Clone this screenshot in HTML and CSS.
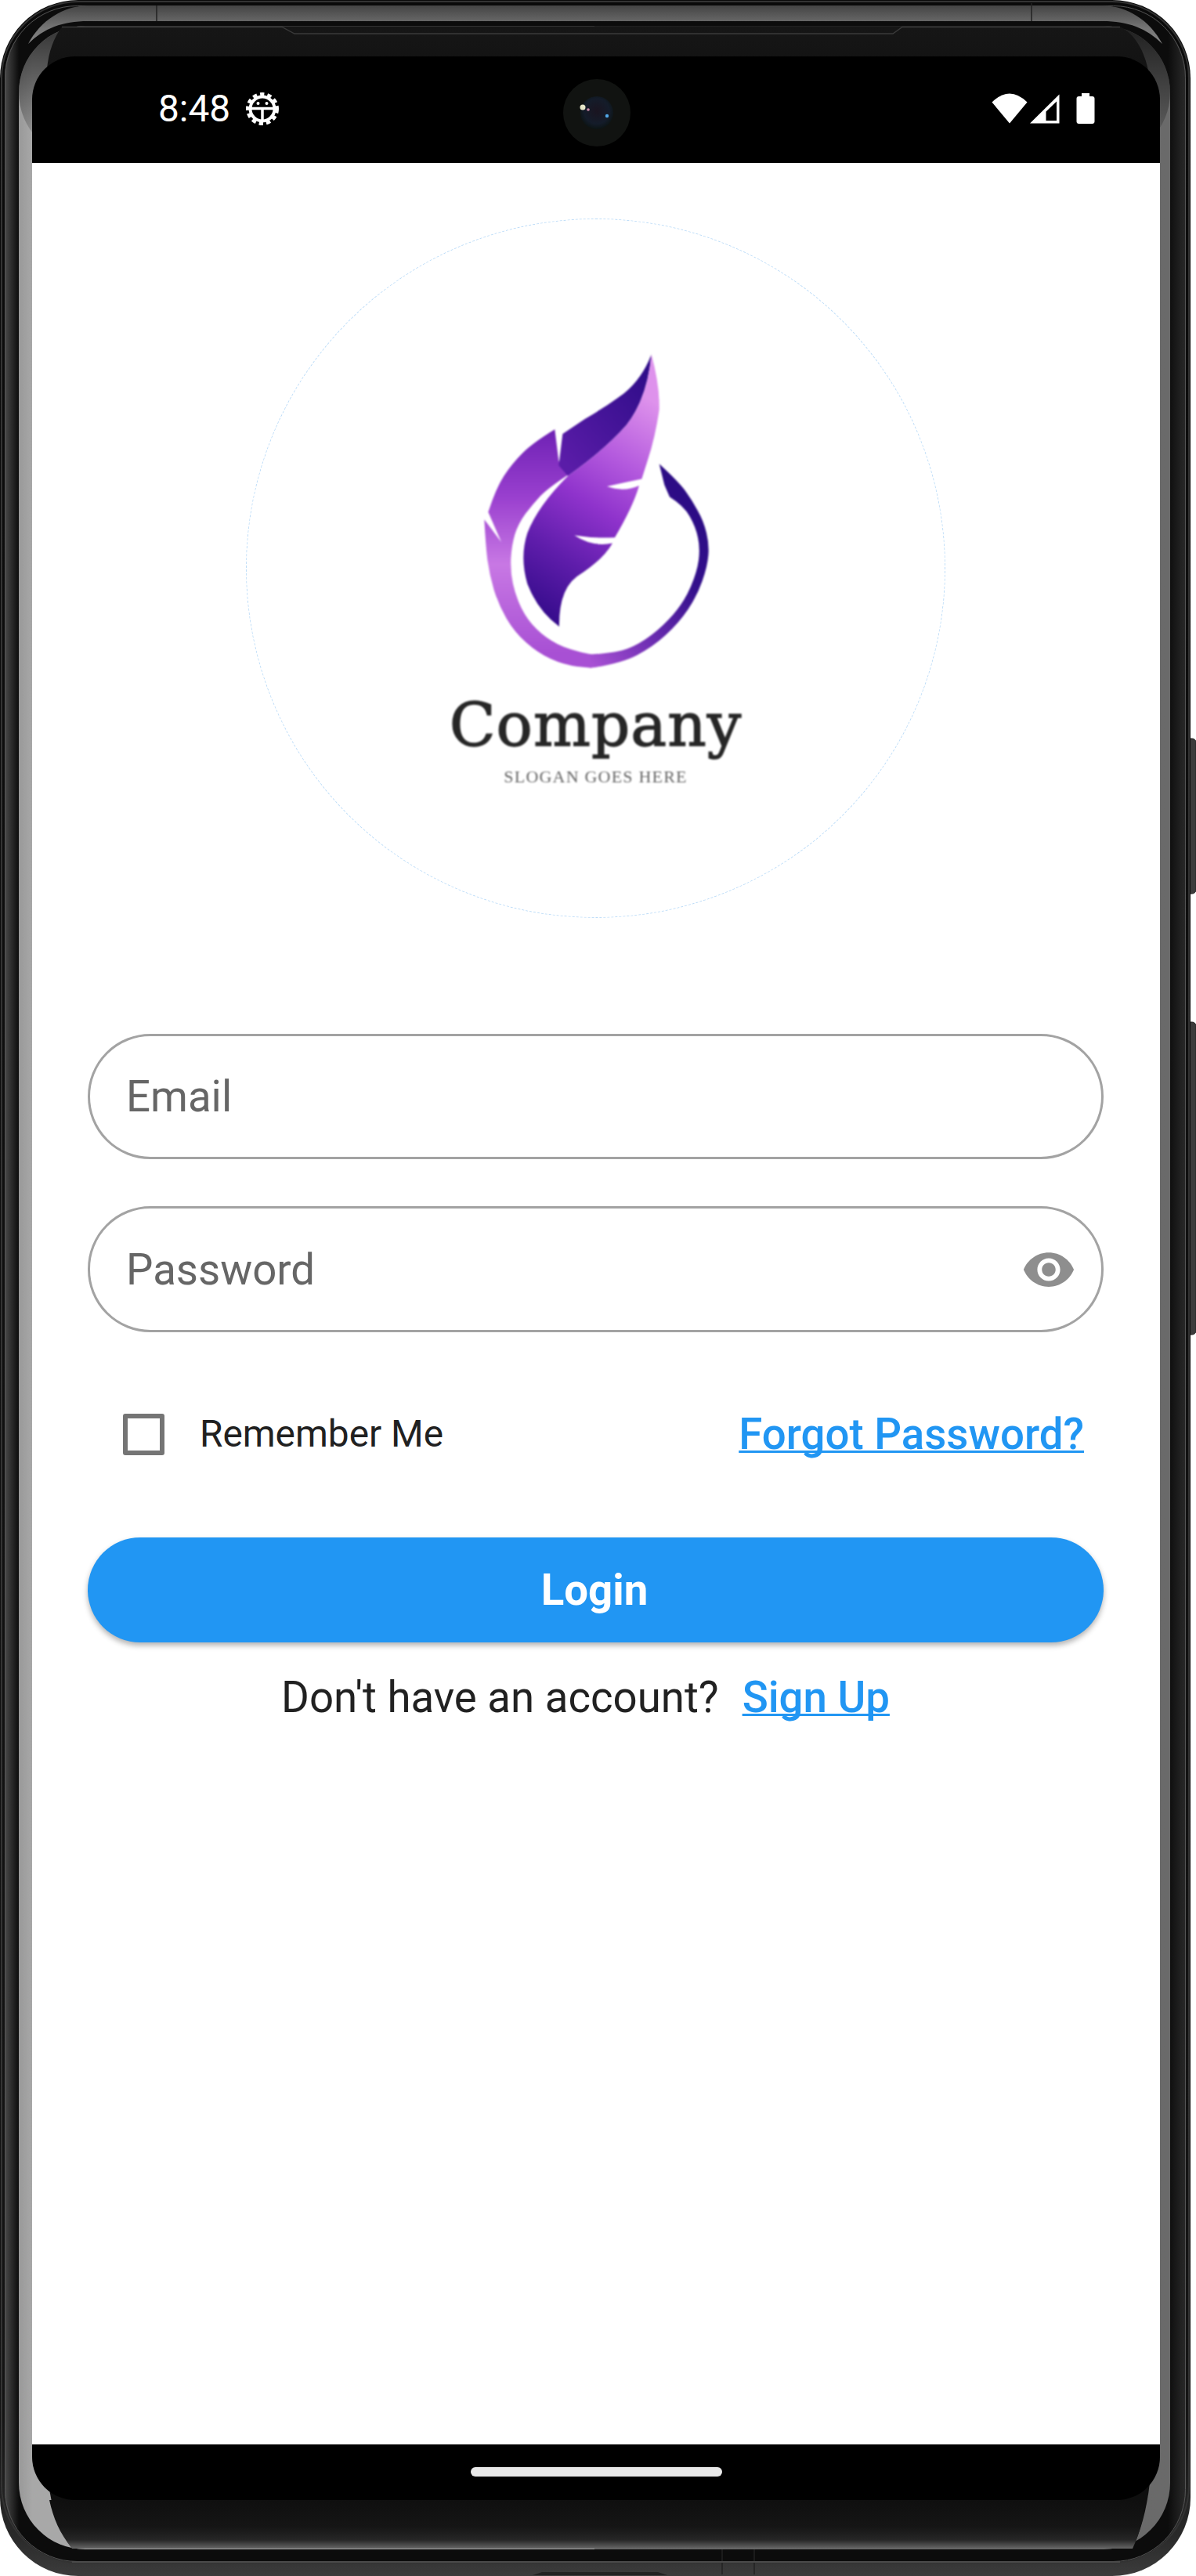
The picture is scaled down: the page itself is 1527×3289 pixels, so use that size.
FILE: index.html
```html
<!DOCTYPE html>
<html lang="en">
<head>
<meta charset="utf-8">
<title>Login</title>
<link rel="stylesheet" href="styles.css">
</head>
<body>
<div class="device">
  <svg class="frame" viewBox="0 0 1527 3289" width="1527" height="3289" aria-hidden="true">
    <defs>
      <linearGradient id="shell" x1="0" y1="0" x2="0" y2="1">
        <stop offset="0" stop-color="#0a0a0a"/><stop offset=".94" stop-color="#141414"/><stop offset=".985" stop-color="#2a2a2a"/><stop offset="1" stop-color="#3c3c3c"/>
      </linearGradient>
      <linearGradient id="rim" x1="0" y1="0" x2="1" y2="0">
        <stop offset="0" stop-color="#4a4a4a"/><stop offset=".012" stop-color="#0c0c0c"/><stop offset=".985" stop-color="#0c0c0c"/><stop offset="1" stop-color="#2a2a2a"/>
      </linearGradient>
      <linearGradient id="band" x1="0" y1="0" x2="0" y2="1">
        <stop offset="0" stop-color="#444"/><stop offset=".6" stop-color="#767676"/><stop offset="1" stop-color="#848484"/>
      </linearGradient>
      <linearGradient id="glass" x1="0" y1="0" x2="1" y2="0">
        <stop offset="0" stop-color="#999"/><stop offset=".012" stop-color="#a8a8a8"/><stop offset=".5" stop-color="#a8a8a8"/><stop offset=".5" stop-color="#686868"/><stop offset="1" stop-color="#6a6a6a"/>
      </linearGradient>
      <linearGradient id="glassfade" x1="0" y1="0" x2="0" y2="1">
        <stop offset="0" stop-color="#000" stop-opacity=".7"/><stop offset="1" stop-color="#000" stop-opacity="0"/>
      </linearGradient>
      <linearGradient id="chin" x1="0" y1="0" x2="0" y2="1">
        <stop offset="0" stop-color="#0f0f0f"/><stop offset=".55" stop-color="#151515"/><stop offset=".82" stop-color="#262626"/><stop offset="1" stop-color="#666"/>
      </linearGradient>
      <linearGradient id="forehead" x1="0" y1="0" x2="0" y2="1">
        <stop offset="0" stop-color="#161616"/><stop offset="1" stop-color="#101010"/>
      </linearGradient>
    </defs>
    <rect class="key" x="1512" y="943" width="15" height="198" rx="5"/>
    <rect class="key" x="1512" y="1305" width="15" height="399" rx="5"/>
    <rect width="1520" height="3289" rx="100" fill="url(#shell)"/>
    <rect x="2" y="2" width="1516" height="3270" rx="98" fill="none" stroke="#333" stroke-width="2"/>
    <rect x="6" y="7" width="1508" height="3264" rx="92" fill="url(#rim)"/>
    <rect x="6.500" y="7.500" width="1507" height="3263" rx="92" fill="none" stroke="#555" stroke-width="1"/>
    <path d="M36 56C52 26 80 8 112 7H1408C1440 8 1468 26 1484 56C1464 36 1440 27 1408 27H112C80 27 56 36 36 56Z" fill="url(#band)"/>
    <path d="M200 7V27M1317 4V27M922 3255V3287M963 3255V3287" stroke="#222" stroke-width="1.500" fill="none"/>
    <rect x="24" y="33" width="1470" height="3222" rx="85" fill="url(#glass)"/>
    <rect x="24" y="33" width="1470" height="170" rx="85" fill="url(#glassfade)"/>
    <path d="M79 34H1430C1450 44 1461 66 1466 90V130H60V88C62 66 68 50 79 34Z" fill="url(#forehead)"/>
    <path d="M79 34.500H360L376 43H1140L1152 34.500H1430" stroke="#3a3a3a" stroke-width="1.300" fill="none"/>
    <path d="M60 3150H1468V3170C1464 3205 1456 3232 1446 3254H92C76 3232 66 3205 62 3170Z" fill="#0e0e0e"/>
    <path d="M62 3192H1463C1460 3215 1455 3235 1446 3254H92C76 3234 68 3215 63 3192Z" fill="url(#chin)"/>
    <path d="M92 3271H1430" stroke="#4a4a4a" stroke-width="2"/>
    <path d="M680 3288L692 3284H840L852 3288Z" fill="#222"/>
  </svg>

  <div class="screen">
    <header class="status">
      <span class="time">8:48</span>
      <svg class="gear" viewBox="0 0 44 44" width="44" height="44" aria-hidden="true">
        <circle cx="22" cy="22" r="15.500" fill="none" stroke="#fff" stroke-width="4"/>
        <circle cx="22" cy="22" r="18.500" fill="none" stroke="#fff" stroke-width="5" stroke-dasharray="5.300 4"/>
        <path d="M7 21.500H37M22 21.500V37" stroke="#fff" stroke-width="3.500" fill="none"/>
        <circle cx="16.500" cy="15" r="2" fill="#fff"/>
        <circle cx="27.500" cy="15" r="2" fill="#fff"/>
      </svg>
      <div class="sys">
        <svg class="wifi" viewBox="0 0 46 40" width="46" height="40" aria-hidden="true"><path d="M23 38.500L.5 11.500Q23-10.500 45.500 11.500Z" fill="#fff"/></svg>
        <svg class="signal" viewBox="0 0 38 38" width="38" height="38" aria-hidden="true"><path fill-rule="evenodd" d="M0 37.500L37.500 .5V37.500ZM20.500 34H34V9.500L20.500 22.500Z" fill="#fff"/></svg>
        <svg class="battery" viewBox="0 0 24 40" width="24" height="40" aria-hidden="true"><path d="M7 0H17V4H20.500Q23.500 4 23.500 7V36Q23.500 39 20.500 39H3.500Q.5 39 .5 36V7Q.5 4 3.500 4H7Z" fill="#fff"/></svg>
      </div>
      <svg class="camera" viewBox="0 0 86 86" width="86" height="86" aria-hidden="true">
        <defs>
          <radialGradient id="lens" cx=".5" cy=".45" r=".55"><stop offset="0" stop-color="#1a1420"/><stop offset=".7" stop-color="#141c2a"/><stop offset="1" stop-color="#0c1414"/></radialGradient>
        </defs>
        <circle cx="43" cy="43" r="43" fill="#111311"/>
        <circle cx="43" cy="43" r="21" fill="url(#lens)"/>
        <circle cx="25" cy="36" r="3.500" fill="#e6e6c8"/>
        <circle cx="32" cy="39" r="1.800" fill="#c88aa8"/>
        <circle cx="56" cy="47" r="2.200" fill="#52a8e8"/>
      </svg>
    </header>

    <main class="main">
      <div class="logo-ring">
        <svg class="mark" viewBox="0 0 1350 1180" width="450" height="452" preserveAspectRatio="none" role="img" aria-label="Company logo">
          <defs>
            <linearGradient id="swoosh" gradientUnits="userSpaceOnUse" x1="0" y1="340" x2="0" y2="1080">
              <stop offset="0" stop-color="#6f22b5"/><stop offset=".3" stop-color="#9a40cf"/><stop offset=".6" stop-color="#c878e4"/><stop offset="1" stop-color="#a850d4"/>
            </linearGradient>
            <linearGradient id="ring" gradientUnits="userSpaceOnUse" x1="640" y1="1110" x2="1090" y2="650">
              <stop offset="0" stop-color="#a850d4"/><stop offset=".35" stop-color="#6a2cb0"/><stop offset=".7" stop-color="#34108c"/><stop offset="1" stop-color="#2c0c85"/>
            </linearGradient>
            <linearGradient id="vane" gradientUnits="userSpaceOnUse" x1="860" y1="230" x2="470" y2="960">
              <stop offset="0" stop-color="#de92ec"/><stop offset=".28" stop-color="#b45ade"/><stop offset=".5" stop-color="#8f33cc"/><stop offset=".75" stop-color="#5f1dab"/><stop offset="1" stop-color="#360c8c"/>
            </linearGradient>
            <linearGradient id="tip" gradientUnits="userSpaceOnUse" x1="860" y1="120" x2="540" y2="440">
              <stop offset="0" stop-color="#2e0c88"/><stop offset="1" stop-color="#5a1ca8"/>
            </linearGradient>
          </defs>
          <path d="M235 635Q240 720 247 770Q255 820 272 870Q290 920 320 965Q350 1010 395 1045Q440 1080 490 1100Q540 1120 590 1125L645 1130L645 1085Q560 1070 515 1050Q470 1030 435 1000Q400 970 377 930Q355 890 345 850Q335 810 337 765Q340 720 352 685Q365 650 392 617Q420 585 450 557Q480 530 555 487L520 440L505 335Q420 380 380 415Q340 450 310 490Q280 530 250 610L300 710Z" fill="url(#swoosh)"/>
          <path d="M640 1130Q760 1115 820 1087Q880 1060 930 1020Q980 980 1015 935Q1050 890 1070 840Q1090 790 1093 755Q1097 720 1086 680Q1075 640 1052 605Q1030 570 1005 540Q980 510 905 450L925 520L945 560Q1000 590 1022 625Q1045 660 1053 695Q1062 730 1056 770Q1050 810 1025 860Q1000 910 960 950Q920 990 875 1020Q830 1050 785 1065Q740 1080 640 1085Z" fill="url(#ring)"/>
          <path d="M875 85Q840 165 770 215Q700 260 620 300L535 350L520 455L555 490Q700 400 780 320Q860 230 875 85Z" fill="url(#tip)"/>
          <path d="M875 85Q908 190 905 270Q890 360 860 440L838 500Q770 512 705 525Q770 545 828 522Q806 590 735 695Q650 698 580 688Q650 728 726 714Q690 770 590 825Q520 870 522 992Q440 940 400 850Q370 760 400 680Q440 590 555 490Q700 400 780 320Q860 230 875 85Z" fill="url(#vane)"/>
        </svg>
        <span class="brand">Company</span>
        <span class="slogan">SLOGAN GOES HERE</span>
      </div>

      <div class="field field-email"><span class="hint">Email</span></div>
      <div class="field field-pass">
        <span class="hint">Password</span>
        <svg class="eye" viewBox="0 0 24 24" width="70" height="70" aria-hidden="true"><path d="M12 4.500C7 4.500 2.730 7.610 1 12c1.730 4.390 6 7.500 11 7.500s9.270-3.110 11-7.500c-1.730-4.390-6-7.500-11-7.500zM12 17c-2.760 0-5-2.240-5-5s2.240-5 5-5 5 2.240 5 5-2.240 5-5 5zm0-8c-1.660 0-3 1.340-3 3s1.340 3 3 3 3-1.340 3-3-1.340-3-3-3z"/></svg>
      </div>

      <div class="options">
        <span class="check"></span>
        <span class="remember">Remember Me</span>
        <a class="link forgot" href="#">Forgot Password?</a>
      </div>

      <button class="login" type="button">Login</button>

      <p class="signup"><span>Don't have an account?</span><a class="link" href="#">Sign Up</a></p>
    </main>

    <footer class="nav"><span class="pill"></span></footer>
  </div>
</div>
</body>
</html>
```

FILE: styles.css
```css
* { box-sizing: border-box; }
html, body { margin: 0; padding: 0; background: #fff; }
body { font-family: Roboto, "Liberation Sans", sans-serif; }

.device {
  position: relative;
  width: 1527px;
  height: 3289px;
  padding: 72px 46px 97px 41px;
  overflow: hidden;
}
.frame { position: absolute; left: 0; top: 0; display: block; }
.key { fill: #3c3c3c; stroke: #222; stroke-width: 1; }

.screen {
  position: relative;
  display: flex;
  flex-direction: column;
  width: 1440px;
  height: 3120px;
}

.status {
  position: relative;
  display: flex;
  align-items: center;
  flex: 0 0 136px;
  padding: 0 83px 0 161px;
  background: #000;
  border-radius: 55px 55px 0 0;
  color: #fff;
}
.time { font-size: 47.75px; line-height: 57px; margin-top: -1px; }
.gear { margin-left: 19px; flex: none; margin-top: -2px; }
.sys { display: flex; align-items: center; margin-left: auto; margin-top: -3px; }
.wifi { flex: none; }
.signal { flex: none; margin-left: 3px; margin-top: 1px; }
.battery { flex: none; margin-left: 21px; }
.camera { position: absolute; left: 678px; top: 29px; }

.main {
  flex: 1;
  display: flex;
  flex-direction: column;
  padding: 71px 72px 0 71px;
  background: #fff;
}

.logo-ring {
  display: flex;
  flex-direction: column;
  align-items: center;
  flex: none;
  width: 893px;
  height: 893px;
  margin: 0 auto;
  border: 1px dashed #bcdcf8;
  border-radius: 50%;
}
.mark { display: block; margin-top: 140px; margin-left: 8px; filter: blur(0.8px); flex: none; }
.brand {
  margin-top: 14px;
  font-family: "DejaVu Serif", serif;
  font-size: 77px;
  line-height: 80px;
  letter-spacing: 1px;
  color: #262626;
  -webkit-text-stroke: 1.4px #262626;
  filter: blur(0.8px);
}
.slogan {
  margin-top: 13px;
  font-family: "Liberation Serif", serif;
  font-size: 22px;
  line-height: 26px;
  letter-spacing: 1.2px;
  color: #666;
  filter: blur(0.8px);
}

.field {
  display: flex;
  align-items: center;
  justify-content: space-between;
  height: 160px;
  padding: 0 32px 0 46px;
  border: 3px solid #a3a3a3;
  border-radius: 80px;
}
.field-email { margin-top: 148px; }
.field-pass { margin-top: 60px; height: 161px; }
.hint { font-size: 54.6px; line-height: 66px; color: #666; }
.eye { fill: #8e8e8e; flex: none; }

.options {
  display: flex;
  align-items: center;
  height: 84px;
  margin-top: 88px;
  padding: 0 25px 0 45px;
}
.check {
  flex: none;
  width: 53px;
  height: 53px;
  border: 6px solid #757575;
  border-radius: 3px;
}
.remember { margin-left: 45px; font-size: 47.75px; line-height: 58px; color: #212121; }
.link {
  color: #2196f3;
  font-weight: 500;
  text-decoration: underline;
  text-decoration-thickness: 3px;
  text-decoration-skip-ink: none;
}
.forgot { margin-left: auto; font-size: 54.6px; line-height: 66px; }

.login {
  display: block;
  flex: none;
  width: 100%;
  height: 134px;
  margin-top: 90px;
  padding: 0 3px 0 0;
  border: 0;
  border-radius: 67px;
  background: #2196f3;
  color: #fff;
  font-family: inherit;
  font-size: 54.6px;
  font-weight: 700;
  box-shadow: 0 4px 7px rgba(0, 0, 0, .3);
}

.signup {
  display: flex;
  justify-content: center;
  gap: 30px;
  margin: 37px 0 0;
  padding-right: 26px;
  font-size: 54.6px;
  line-height: 66px;
  color: #212121;
}

.nav {
  display: flex;
  justify-content: center;
  flex: 0 0 71px;
  padding-top: 29px;
  background: #000;
  border-radius: 0 0 55px 55px;
}
.pill { width: 321px; height: 12px; border-radius: 6px; background: #e8e8e8; }
```
